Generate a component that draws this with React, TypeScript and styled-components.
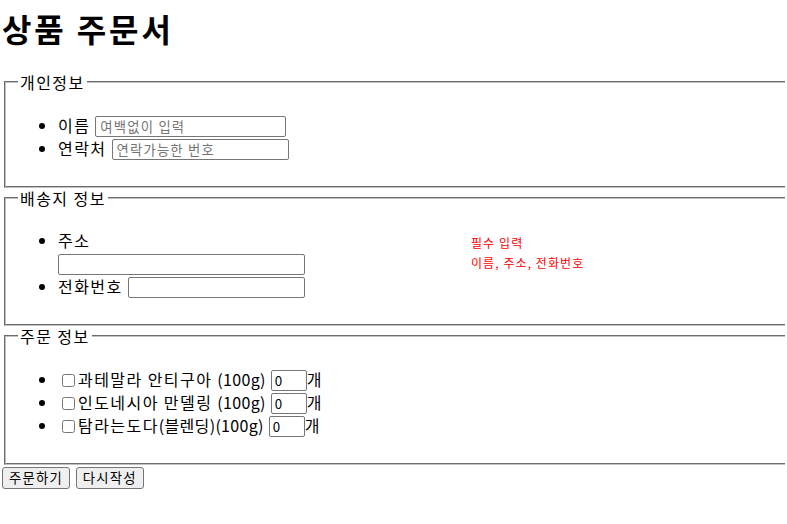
import styled, { createGlobalStyle } from "styled-components";

const GlobalStyle = createGlobalStyle`
  html, body {
    overflow: hidden;
  }
  body {
    margin: 0;
    padding: 0 2px;
    font-family: "Noto Sans CJK KR", sans-serif;
    font-size: 16px;
    letter-spacing: 0.09em;
    color: #000;
    background: #fff;
  }
`;

const products = [
  { id: "guatemala", name: "과테말라 안티구아 ", weight: "(100g)" },
  { id: "mandheling", name: "인도네시아 만델링 ", weight: "(100g)" },
  { id: "tamra", name: "탐라는도다", weight: "(블렌딩)(100g)" },
];

export default function App() {
  return (
    <>
      <GlobalStyle />
      <Title>상품 주문서</Title>
      <form>
        <Section>
          <Legend>개인정보</Legend>
          <List>
            <Item>
              이름 <TextInput $width={191} placeholder="여백없이 입력" />
            </Item>
            <Item>
              연락처 <TextInput $width={177} placeholder="연락가능한 번호" />
            </Item>
          </List>
        </Section>

        <Section>
          <Legend>배송지 정보</Legend>
          <Row>
            <List $width={453}>
              <Item>
                주소
                <br />
                <TextInput $width={247} />
              </Item>
              <Item>
                전화번호 <TextInput $width={177} />
              </Item>
            </List>
            <Note>
              필수 입력
              <br />
              이름, 주소, 전화번호
            </Note>
          </Row>
        </Section>

        <Section>
          <Legend>주문 정보</Legend>
          <List>
            {products.map((p) => (
              <Item key={p.id}>
                <Check type="checkbox" id={p.id} />
                <label htmlFor={p.id}>
                  {p.name}
                  <Latin>{p.weight}</Latin>
                </label>{" "}
                <Count type="number" defaultValue={0} />
                개
              </Item>
            ))}
          </List>
        </Section>

        <Buttons>
          <Button type="submit">주문하기</Button>
          <Button type="reset">다시작성</Button>
        </Buttons>
      </form>
    </>
  );
}

const Title = styled.h1`
  margin: 8px 0 24px 0;
  font-size: 32px;
  font-weight: 700;
  letter-spacing: 0.09em;
  line-height: 40px;
`;

const Section = styled.fieldset`
  margin: 0 0 0 2px;
  padding: 5.6px 12px 10px 12px;
  border: 2px groove #c0c0c0;
  border-right: none;
`;

const Legend = styled.legend`
  padding: 0 2px;
  line-height: 20px;
`;

const Row = styled.div`
  display: flex;
  align-items: flex-start;
`;

const List = styled.ul<{ $width?: number }>`
  margin: 16px 0;
  padding-left: 40px;
  list-style: disc;
  width: ${(p) => (p.$width ? `${p.$width - 40}px` : "auto")};
`;

const Item = styled.li`
  line-height: 23px;
`;

const Latin = styled.span`
  letter-spacing: 0.02em;
`;

const TextInput = styled.input.attrs({ type: "text" })<{ $width: number }>`
  box-sizing: border-box;
  width: ${(p) => p.$width}px;
  height: 21px;
  margin: 0;
  padding: 1px 4px;
  font-family: "Noto Sans CJK KR", sans-serif;
  font-size: 13.33px;
  letter-spacing: 0.09em;
  line-height: 17px;
  border: 1px solid #767676;
  border-radius: 2px;
  vertical-align: bottom;

  &::placeholder {
    color: #757575;
  }
`;

const Check = styled.input`
  width: 13px;
  height: 13px;
  margin: 3px 3px 3px 4px;
  vertical-align: -1px;
`;

const Count = styled.input`
  box-sizing: border-box;
  width: 36px;
  height: 21px;
  margin: 0;
  padding: 1px 3px;
  font-family: "Noto Sans CJK KR", sans-serif;
  font-size: 13.33px;
  border: 1px solid #767676;
  border-radius: 2px;
  vertical-align: bottom;
  -moz-appearance: textfield;

  &::-webkit-inner-spin-button,
  &::-webkit-outer-spin-button {
    -webkit-appearance: none;
    margin: 0;
  }
`;

const Note = styled.div`
  margin-top: 20px;
  color: #ff0000;
  font-size: 12px;
  letter-spacing: 0.09em;
  line-height: 20px;
`;

const Buttons = styled.div`
  display: flex;
  gap: 6px;
  padding-top: 2px;
`;

const Button = styled.button`
  height: 22px;
  padding: 0 6px;
  font-family: "Noto Sans CJK KR", sans-serif;
  font-size: 13.33px;
  letter-spacing: 0.09em;
  line-height: 18px;
  color: #000;
  background: #efefef;
  border: 1px solid #767676;
  border-radius: 3px;
`;
